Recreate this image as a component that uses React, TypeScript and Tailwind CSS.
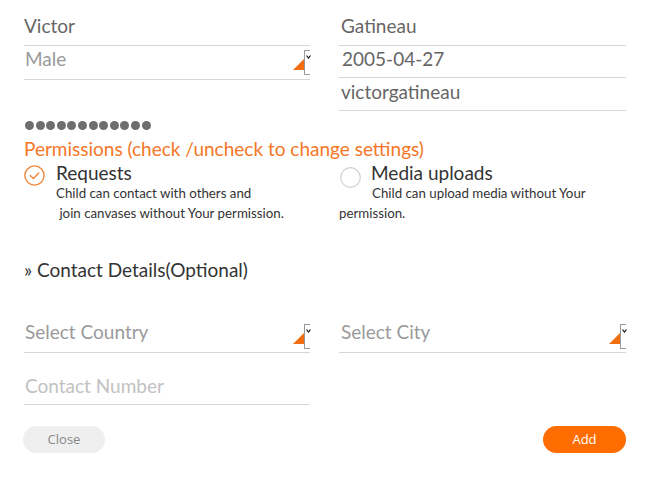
import React from "react";

function DropIcon() {
  return (
    <>
      <svg
        className="absolute right-[5px] top-[12px]"
        width="12"
        height="12"
        viewBox="0 0 12 12"
      >
        <polygon points="12,0 12,12 0,12" fill="#f26d10" />
      </svg>
      <div className="absolute right-0 top-[4px] h-[25px] w-[6px] border border-r-0 border-[#9a9a9a] bg-white">
        <svg className="absolute left-[1px] top-[4px]" width="5" height="4" viewBox="0 0 5 4">
          <path d="M0.5 0.5 L2.5 3 L4.5 0.5" stroke="#111" strokeWidth="1.2" fill="none" />
        </svg>
      </div>
    </>
  );
}

export default function App() {
  const dots = Array.from({ length: 12 });
  return (
    <div className="w-[656px] h-[489px] bg-white font-['Lato',sans-serif] overflow-hidden">
      <div className="pl-[24px] w-[626px]">
        {/* top fields */}
        <div className="flex gap-[29px]">
          <div className="w-[286px]">
            <div className="h-[46px] flex items-end pb-[7px] border-b border-[#d6d6d6] text-[19px] leading-[24px] text-[#666]">
              Victor
            </div>
            <div className="relative h-[34px] flex items-end pb-[8px] pl-[1px] border-b border-[#d6d6d6] text-[19px] leading-[24px] text-[#9a9a9a]">
              Male
              <DropIcon />
            </div>
          </div>
          <div className="w-[287px]">
            <div className="h-[46px] flex items-end pb-[7px] pl-[2px] border-b border-[#d6d6d6] text-[19px] leading-[24px] text-[#666]">
              Gatineau
            </div>
            <div className="h-[32px] flex items-end pb-[6px] pl-[3px] border-b border-[#d6d6d6] text-[19px] leading-[24px] text-[#666]">
              2005-04-27
            </div>
            <div className="h-[33px] flex items-end pb-[6px] pl-[2px] border-b border-[#d6d6d6] text-[19px] leading-[24px] text-[#666]">
              victorgatineau
            </div>
          </div>
        </div>

        {/* password dots */}
        <div className="mt-[10px] h-[9px] flex gap-[1.6px] pl-[1px]">
          {dots.map((_, i) => (
            <div key={i} className="w-[9px] h-[9px] rounded-full bg-[#6e6e6e]" />
          ))}
        </div>

        {/* permissions */}
        <div className="mt-[7px] text-[19px] leading-[24px] text-[#f47626]">
          Permissions (check /uncheck to change settings)
        </div>
        <div className="flex gap-[29px]">
          <div className="w-[286px] flex">
            <svg className="mt-[4px] shrink-0" width="21" height="21" viewBox="0 0 21 21">
              <circle cx="10.5" cy="10.5" r="9.6" stroke="#f0873f" strokeWidth="1.4" fill="none" />
              <path d="M6.3 10.6 L9.4 13.6 L14.8 8" stroke="#f0873f" strokeWidth="1.4" fill="none" strokeLinecap="round" strokeLinejoin="round" />
            </svg>
            <div className="ml-[11px]">
              <div className="text-[19px] leading-[23px] text-[#333]">Requests</div>
              <div className="text-[13.3px] leading-[19.5px] text-[#333]">
                Child can contact with others and
                <br />
                &nbsp;join canvases without Your permission.
              </div>
            </div>
          </div>
          <div className="w-[287px]">
            <div className="flex items-start">
              <svg className="mt-[6px] ml-[1px] shrink-0" width="21" height="21" viewBox="0 0 21 21">
                <circle cx="10.5" cy="10.5" r="9.8" stroke="#cfcfcf" strokeWidth="1.2" fill="none" />
              </svg>
              <div className="ml-[10px] text-[19px] leading-[23px] text-[#333]">Media uploads</div>
            </div>
            <div className="-mt-[4px] indent-[33px] text-[13.3px] leading-[19.5px] text-[#333]">
              Child can upload media without Your permission.
            </div>
          </div>
        </div>

        {/* contact details */}
        <div className="mt-[35px] text-[19px] leading-[24px] text-[#333]">
          » Contact Details(Optional)
        </div>
        <div className="mt-[38px] flex gap-[29px]">
          <div className="relative w-[286px] h-[33px] flex items-end pb-[8px] pl-[1px] border-b border-[#d6d6d6] text-[19px] leading-[24px] text-[#9a9a9a]">
            Select Country
            <DropIcon />
          </div>
          <div className="relative w-[287px] h-[33px] flex items-end pb-[8px] pl-[2px] border-b border-[#d6d6d6] text-[19px] leading-[24px] text-[#9a9a9a]">
            Select City
            <DropIcon />
          </div>
        </div>
        <div className="w-[286px] h-[52px] flex items-end pb-[6px] pl-[1px] border-b border-[#d6d6d6] text-[19px] leading-[24px] text-[#c2c2c2]">
          Contact Number
        </div>

        {/* buttons */}
        <div className="mt-[21px] flex justify-between">
          <button className="-ml-[1px] w-[82px] h-[27px] rounded-full bg-[#efefef] text-[13px] text-[#888] font-['Open_Sans',sans-serif]">
            Close
          </button>
          <button className="w-[83px] h-[27px] rounded-full bg-[#ff6c00] text-[13px] text-white font-['Open_Sans',sans-serif]">
            Add
          </button>
        </div>
      </div>
    </div>
  );
}
